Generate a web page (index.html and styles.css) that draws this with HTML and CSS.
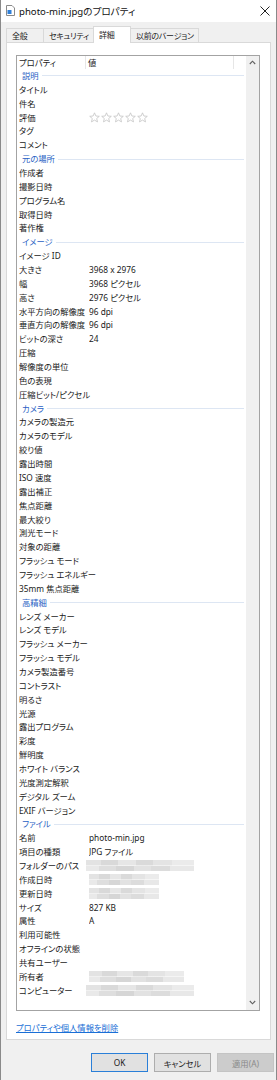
FILE: index.html
```html
<!DOCTYPE html>
<html lang="ja">
<head>
<meta charset="utf-8">
<title>photo-min.jpgのプロパティ</title>
<link rel="stylesheet" href="styles.css">
</head>
<body>
<div class="window">
  <div class="titlebar">
    <svg class="app-icon" width="9" height="11" viewBox="0 0 9 11"><path d="M0.5 0.5h5.5l2.5 2.5v7.5h-8z" fill="#fff" stroke="#8a8a8a"/><rect x="1.5" y="5" width="4" height="4" fill="#2f7fd8"/></svg>
    <span class="title">photo-min.jpgのプロパティ</span>
    <svg class="close" width="10" height="10" viewBox="0 0 10 10"><path d="M0.5 0.5l9 9M9.5 0.5l-9 9" stroke="#222" stroke-width="1"/></svg>
  </div>
  <div class="tabs">
    <div class="tab t1">全般</div>
    <div class="tab t2">セキュリティ</div>
    <div class="tab t3 active">詳細</div>
    <div class="tab t4">以前のバージョン</div>
  </div>
  <div class="panel">
    <div class="list">
      <div class="list-body">
        <div class="list-head"><span class="h-name">プロパティ</span><span class="h-value">値</span><span class="h-rest"></span></div>

        <div class="group"><span>説明</span></div>
        <div class="row"><span>タイトル</span><span></span></div>
        <div class="row"><span>件名</span><span></span></div>
        <div class="row"><span>評価</span><span class="stars">
          <svg width="60" height="11" viewBox="0 0 60 11"><g fill="none" stroke="#c4c4c4" stroke-width="0.8">
            <path id="s" d="M5.5 0.8l1.4 3.2 3.4 0.3-2.6 2.2 0.8 3.4-3-1.8-3 1.8 0.8-3.4-2.6-2.2 3.4-0.3z"/>
            <use href="#s" x="12"/><use href="#s" x="24"/><use href="#s" x="36"/><use href="#s" x="48"/></g></svg>
        </span></div>
        <div class="row"><span>タグ</span><span></span></div>
        <div class="row"><span>コメント</span><span></span></div>

        <div class="group"><span>元の場所</span></div>
        <div class="row"><span>作成者</span><span></span></div>
        <div class="row"><span>撮影日時</span><span></span></div>
        <div class="row"><span>プログラム名</span><span></span></div>
        <div class="row"><span>取得日時</span><span></span></div>
        <div class="row"><span>著作権</span><span></span></div>

        <div class="group"><span>イメージ</span></div>
        <div class="row"><span>イメージ ID</span><span></span></div>
        <div class="row"><span>大きさ</span><span>3968 x 2976</span></div>
        <div class="row"><span>幅</span><span>3968 ピクセル</span></div>
        <div class="row"><span>高さ</span><span>2976 ピクセル</span></div>
        <div class="row"><span>水平方向の解像度</span><span>96 dpi</span></div>
        <div class="row"><span>垂直方向の解像度</span><span>96 dpi</span></div>
        <div class="row"><span>ビットの深さ</span><span>24</span></div>
        <div class="row"><span>圧縮</span><span></span></div>
        <div class="row"><span>解像度の単位</span><span></span></div>
        <div class="row"><span>色の表現</span><span></span></div>
        <div class="row"><span>圧縮ビット/ピクセル</span><span></span></div>

        <div class="group"><span>カメラ</span></div>
        <div class="row"><span>カメラの製造元</span><span></span></div>
        <div class="row"><span>カメラのモデル</span><span></span></div>
        <div class="row"><span>絞り値</span><span></span></div>
        <div class="row"><span>露出時間</span><span></span></div>
        <div class="row"><span>ISO 速度</span><span></span></div>
        <div class="row"><span>露出補正</span><span></span></div>
        <div class="row"><span>焦点距離</span><span></span></div>
        <div class="row"><span>最大絞り</span><span></span></div>
        <div class="row"><span>測光モード</span><span></span></div>
        <div class="row"><span>対象の距離</span><span></span></div>
        <div class="row"><span>フラッシュ モード</span><span></span></div>
        <div class="row"><span>フラッシュ エネルギー</span><span></span></div>
        <div class="row"><span>35mm 焦点距離</span><span></span></div>

        <div class="group"><span>高精細</span></div>
        <div class="row"><span>レンズ メーカー</span><span></span></div>
        <div class="row"><span>レンズ モデル</span><span></span></div>
        <div class="row"><span>フラッシュ メーカー</span><span></span></div>
        <div class="row"><span>フラッシュ モデル</span><span></span></div>
        <div class="row"><span>カメラ製造番号</span><span></span></div>
        <div class="row"><span>コントラスト</span><span></span></div>
        <div class="row"><span>明るさ</span><span></span></div>
        <div class="row"><span>光源</span><span></span></div>
        <div class="row"><span>露出プログラム</span><span></span></div>
        <div class="row"><span>彩度</span><span></span></div>
        <div class="row"><span>鮮明度</span><span></span></div>
        <div class="row"><span>ホワイト バランス</span><span></span></div>
        <div class="row"><span>光度測定解釈</span><span></span></div>
        <div class="row"><span>デジタル ズーム</span><span></span></div>
        <div class="row"><span>EXIF バージョン</span><span></span></div>

        <div class="group"><span>ファイル</span></div>
        <div class="row"><span>名前</span><span>photo-min.jpg</span></div>
        <div class="row"><span>項目の種類</span><span>JPG ファイル</span></div>
        <div class="row"><span>フォルダーのパス</span><span class="blur b-path"></span></div>
        <div class="row"><span>作成日時</span><span class="blur b-date"></span></div>
        <div class="row"><span>更新日時</span><span class="blur b-date"></span></div>
        <div class="row"><span>サイズ</span><span>827 KB</span></div>
        <div class="row"><span>属性</span><span>A</span></div>
        <div class="row"><span>利用可能性</span><span></span></div>
        <div class="row"><span>オフラインの状態</span><span></span></div>
        <div class="row"><span>共有ユーザー</span><span></span></div>
        <div class="row"><span>所有者</span><span class="blur b-owner"></span></div>
        <div class="row"><span>コンピューター</span><span class="blur b-path"></span></div>
      </div>
      <div class="scrollbar">
        <svg width="7" height="5" viewBox="0 0 7 5"><path d="M0.8 4l2.7-2.8 2.7 2.8" fill="none" stroke="#606060" stroke-width="1.1"/></svg>
        <svg width="7" height="5" viewBox="0 0 7 5"><path d="M0.8 1l2.7 2.8 2.7-2.8" fill="none" stroke="#606060" stroke-width="1.1"/></svg>
      </div>
    </div>
    <a class="link" href="#">プロパティや個人情報を削除</a>
  </div>
  <div class="footer">
    <button class="btn default">OK</button>
    <button class="btn">キャンセル</button>
    <button class="btn disabled">適用(A)</button>
  </div>
</div>
</body>
</html>
```

FILE: styles.css
```css
* { box-sizing: border-box; }
html, body { margin: 0; padding: 0; }
body {
  width: 277px;
  height: 1080px;
  background: #f0f0f0;
  font-family: "Noto Sans", "Noto Sans CJK JP", sans-serif;
  font-feature-settings: "palt";
  font-size: 8.3px;
  color: #1a1a1a;
  overflow: hidden;
}
.window {
  width: 277px;
  height: 1080px;
  border-left: 1px solid #8a8a8a;
  border-right: 1px solid #8a8a8a;
  background: #f0f0f0;
}
.titlebar {
  height: 22px;
  background: #fff;
  display: flex;
  align-items: center;
  padding-left: 5px;
  padding-right: 6px;
}
.app-icon { flex: none; margin-top: -1px; }
.title {
  margin-left: 4px;
  font-size: 9.6px;
  color: #111;
  flex: 1;
}
.close { flex: none; }
.tabs {
  height: 20px;
  display: flex;
  align-items: flex-end;
  padding-left: 5px;
}
.tab {
  flex: none;
  height: 14px;
  line-height: 13px;
  border: 1px solid #d9d9d9;
  border-bottom: none;
  border-right: none;
  background: #f0f0f0;
  padding: 0 4px 0 5px;
  white-space: nowrap;
  font-size: 8px;
  letter-spacing: -0.25px;
  color: #1a1a1a;
}
.t1 { min-width: 37px; }
.t3 { min-width: 38px; }
.t4 { border-right: 1px solid #d9d9d9; }
.tab.active {
  height: 17px;
  line-height: 16px;
  margin-bottom: -1px;
  background: #fff;
  border-right: 1px solid #d9d9d9;
  position: relative;
  z-index: 1;
}
.t3 + .t4 { border-left: none; }
.panel {
  width: 265px;
  height: 998px;
  margin-left: 5px;
  background: #fff;
  border: 1px solid #d9d9d9;
  padding: 12px 0 0 9px;
}
.list {
  width: 244px;
  height: 956px;
  border: 1px solid #a3a3a3;
  display: flex;
}
.list-body { flex: 1; min-width: 0; }
.list-head {
  height: 13px;
  display: flex;
  line-height: 13px;
}
.h-name { width: 69px; padding-left: 2px; border-right: 1px solid #e6e6e6; }
.h-value { width: 148px; padding-left: 2px; border-right: 1px solid #e6e6e6; }
.h-rest { flex: 1; }
.group {
  height: 13.86px;
  line-height: 13.86px;
  display: flex;
  align-items: center;
  padding-left: 5px;
  padding-right: 2px;
  color: #2a5fc4;
}
.group::after {
  content: "";
  flex: 1;
  height: 1px;
  margin-left: 3px;
  background: #dde6f3;
}
.row {
  height: 13.86px;
  line-height: 13.86px;
  display: grid;
  grid-template-columns: 70px 1fr;
  padding-left: 2px;
  white-space: nowrap;
}
.row > span { display: flex; align-items: center; }
.row > span:last-child { overflow: hidden; }
.stars svg { display: block; }
.blur {
  height: 11px;
  align-self: center;
  background:
    linear-gradient(90deg, #e3e3e3 0 14%, #d9d9d9 14% 30%, #e6e6e6 30% 46%, #dadada 46% 62%, #e4e4e4 62% 80%, #ebebeb 80% 100%) top / 100% 50% no-repeat,
    linear-gradient(90deg, #e9e9e9 0 12%, #dedede 12% 28%, #d6d6d6 28% 44%, #e2e2e2 44% 60%, #dcdcdc 60% 78%, #e8e8e8 78% 100%) bottom / 100% 50% no-repeat;
}
.b-path { width: 108px; margin-left: -3px; }
.b-date { width: 70px; }
.b-owner { width: 95px; }
.scrollbar {
  width: 13px;
  flex: none;
  background: #f0f0f0;
  display: flex;
  flex-direction: column;
  justify-content: space-between;
  align-items: center;
  padding: 4px 0 5px;
}
.scrollbar svg { display: block; }
.link {
  display: inline-block;
  margin-top: 10px;
  color: #1a6fd6;
  text-decoration: underline;
}
.footer {
  display: flex;
  justify-content: flex-end;
  gap: 6px;
  padding: 13px 2px 0 0;
}
.btn {
  width: 57px;
  height: 19px;
  padding: 0;
  font-family: inherit;
  font-feature-settings: "palt";
  font-size: 8.3px;
  color: #1a1a1a;
  background: #e1e1e1;
  border: 1px solid #adadad;
}
.btn.default { border-color: #2a7fd8; }
.btn.disabled { background: #cccccc; border-color: #c4c4c4; color: #8a8a8a; }
```
